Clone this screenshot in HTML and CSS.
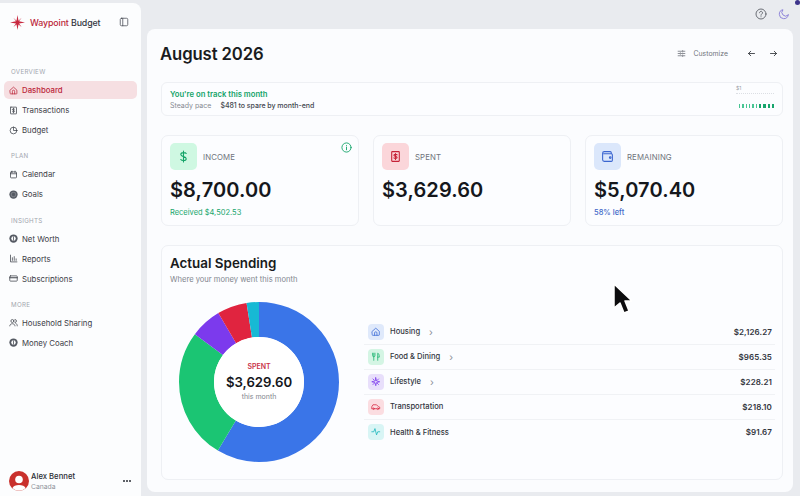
FILE: index.html
```html
<!DOCTYPE html>
<html lang="en">
<head>
<meta charset="utf-8">
<title>Waypoint Budget</title>
<link rel="stylesheet" href="styles.css">
</head>
<body>
<div class="app">
  <aside class="sidebar">
    <div class="brand">
      <svg class="logo" viewBox="0 0 20 20"><path d="M10 0l1.300 7.500 4.200-4 -3.500 4.700L20 10l-8 1.300 3.500 4.700-4.200-3.500L10 20l-1.300-7.500-4.200 3.500 3.500-4.700L0 10l8-1.800-3.500-4.700 4.200 4z" fill="#c8283f"/></svg>
      <span class="brand-name"><b>Waypoint</b> Budget</span>
      <svg class="ico collapse" viewBox="0 0 24 24"><rect x="3" y="3" width="18" height="18" rx="3"/><path d="M9 3v18"/></svg>
    </div>
    <nav class="nav">
      <div class="nav-label">OVERVIEW</div>
      <a class="nav-item active"><svg class="ico" viewBox="0 0 24 24"><path d="M3 11l9-8 9 8v9a1 1 0 0 1-1 1H4a1 1 0 0 1-1-1z"/><path d="M9 21v-7a3 3 0 0 1 6 0v7"/></svg>Dashboard</a>
      <a class="nav-item"><svg class="ico" viewBox="0 0 24 24"><rect x="4" y="3" width="16" height="18" rx="1"/><path d="M15 8.500c-1-1.500-6-1.500-6 1 0 3 6 1.500 6 4.500 0 2.500-5 2.500-6 1M12 6v12"/></svg>Transactions</a>
      <a class="nav-item"><svg class="ico" viewBox="0 0 24 24"><circle cx="12" cy="12" r="9"/><path d="M12 3v9h9"/></svg>Budget</a>
      <div class="nav-label">PLAN</div>
      <a class="nav-item"><svg class="ico" viewBox="0 0 24 24"><rect x="4" y="5" width="16" height="16" rx="2"/><path d="M4 10h16M8 3v4M16 3v4"/></svg>Calendar</a>
      <a class="nav-item"><svg class="ico" viewBox="0 0 24 24"><circle class="solid" cx="12" cy="12" r="11"/><circle class="ring" cx="12" cy="12" r="6"/></svg>Goals</a>
      <div class="nav-label">INSIGHTS</div>
      <a class="nav-item"><svg class="ico" viewBox="0 0 24 24"><circle class="solid" cx="12" cy="12" r="11"/><circle class="hole" cx="12" cy="12" r="6"/><path d="M12 7.500v9"/></svg>Net Worth</a>
      <a class="nav-item"><svg class="ico" viewBox="0 0 24 24"><path d="M4 3v18h17M9 17v-7M14 17V7M19 17v-4"/></svg>Reports</a>
      <a class="nav-item"><svg class="ico" viewBox="0 0 24 24"><rect x="2" y="5" width="20" height="14" rx="2"/><path class="thick" d="M2 10h20"/></svg>Subscriptions</a>
      <div class="nav-label">MORE</div>
      <a class="nav-item"><svg class="ico" viewBox="0 0 24 24"><circle cx="9" cy="8" r="4"/><path d="M2 21c0-8 14-8 14 0M16 4a4 4 0 0 1 0 8M18 14c2.500 1 4 3.500 4 7"/></svg>Household Sharing</a>
      <a class="nav-item"><svg class="ico" viewBox="0 0 24 24"><circle class="solid" cx="12" cy="12" r="11"/><circle class="hole" cx="12" cy="12" r="6"/><path d="M12 7.500v9"/></svg>Money Coach</a>
    </nav>
    <div class="user">
      <svg class="avatar" viewBox="0 0 20 20"><circle cx="10" cy="10" r="10" fill="#c9302c"/><circle cx="10" cy="8.500" r="3.800" fill="#fff"/><path d="M3.500 17c1-4 12-4 13 0-3 3.500-10 3.500-13 0z" fill="#fff"/></svg>
      <div class="user-text"><div class="user-name">Alex Bennet</div><div class="user-sub">Canada</div></div>
      <span class="dots"><i></i><i></i><i></i></span>
    </div>
  </aside>
  <div class="main-col">
    <header class="topbar">
      <svg class="ico top-help" viewBox="0 0 24 24"><circle cx="12" cy="12" r="10"/><path d="M9 9.500a3 3 0 1 1 4.500 2.600c-1 .6-1.500 1.100-1.500 2.400M12 17.500v.1"/></svg>
      <svg class="ico top-moon" viewBox="0 0 24 24"><path d="M20.500 14A9 9 0 1 1 10 3.500 7 7 0 0 0 20.500 14z"/></svg>
    </header>
    <main class="panel">
      <div class="head">
        <h1>August 2026</h1>
        <div class="head-tools">
          <svg class="ico tune" viewBox="0 0 24 24"><path d="M3 6h10M17 6h4M3 12h4M11 12h10M3 18h10M17 18h4M15 4v4M9 10v4M15 16v4"/></svg>
          <span class="customize">Customize</span>
          <span class="round"><svg class="ico" viewBox="0 0 24 24"><path d="M20 12H4M10 6l-6 6 6 6"/></svg></span>
          <span class="round"><svg class="ico" viewBox="0 0 24 24"><path d="M4 12h16M14 6l6 6-6 6"/></svg></span>
        </div>
      </div>
      <section class="banner">
        <div>
          <div class="banner-title">You're on track this month</div>
          <div class="banner-sub"><span>Steady pace</span><strong>$481 to spare by month-end</strong></div>
        </div>
        <div class="spark">
          <div class="spark-label">$1</div>
          <div class="spark-line"></div>
          <div class="spark-bars"><i></i><i></i><i></i><i></i><i></i><i></i><i class="hi"></i><i class="hi"></i><i class="hi"></i><i class="hi"></i></div>
        </div>
      </section>
      <section class="stats">
        <article class="card">
          <div class="card-head">
            <span class="tile green"><svg class="ico" viewBox="0 0 24 24"><path d="M17 6.500C15.500 4 7 4 7 8.500c0 5 10 2.500 10 7.500 0 4.500-8.500 4-10 1.500M12 2v20"/></svg></span>
            <span class="card-label">INCOME</span>
            <svg class="ico info" viewBox="0 0 24 24"><circle cx="12" cy="12" r="10"/><path d="M12 11v6M12 7.500v.1"/></svg>
          </div>
          <div class="amount">$8,700.00</div>
          <div class="note green-t">Received $4,502.53</div>
        </article>
        <article class="card">
          <div class="card-head">
            <span class="tile red"><svg class="ico" viewBox="0 0 24 24"><rect x="5" y="3" width="14" height="18" rx="1"/><path d="M15 9c-1-1.500-6-1.500-6 .5 0 3 6 1.500 6 4.500 0 2-5 2-6 .5M12 6.500v11"/></svg></span>
            <span class="card-label">SPENT</span>
          </div>
          <div class="amount">$3,629.60</div>
        </article>
        <article class="card">
          <div class="card-head">
            <span class="tile blue"><svg class="ico" viewBox="0 0 24 24"><path d="M19 7V5a2 2 0 0 0-2-2H6a3 3 0 0 0-3 3v12a3 3 0 0 0 3 3h13a2 2 0 0 0 2-2V9a2 2 0 0 0-2-2H5"/><circle cx="17" cy="14" r="1.500"/></svg></span>
            <span class="card-label">REMAINING</span>
          </div>
          <div class="amount">$5,070.40</div>
          <div class="note blue-t">58% left</div>
        </article>
      </section>
      <section class="chart-card">
        <h2>Actual Spending</h2>
        <p class="chart-sub">Where your money went this month</p>
        <div class="chart-body">
          <div class="donut">
            <svg viewBox="0 0 160 160">
              <circle class="seg s1" cx="80" cy="80" r="62.500" pathLength="100"/>
              <circle class="seg s2" cx="80" cy="80" r="62.500" pathLength="100"/>
              <circle class="seg s3" cx="80" cy="80" r="62.500" pathLength="100"/>
              <circle class="seg s4" cx="80" cy="80" r="62.500" pathLength="100"/>
              <circle class="seg s5" cx="80" cy="80" r="62.500" pathLength="100"/>
            </svg>
            <div class="donut-center">
              <div class="dc-label">SPENT</div>
              <div class="dc-amount">$3,629.60</div>
              <div class="dc-sub">this month</div>
            </div>
          </div>
          <ul class="rows">
            <li class="row"><span class="mini m-blue"><svg class="ico" viewBox="0 0 24 24"><path d="M3 11l9-8 9 8v9a1 1 0 0 1-1 1H4a1 1 0 0 1-1-1z"/><path d="M9 21v-6a3 3 0 0 1 6 0v6"/></svg></span><span class="row-name">Housing</span><span class="chev">›</span><span class="row-val">$2,126.27</span></li>
            <li class="row"><span class="mini m-green"><svg class="ico" viewBox="0 0 24 24"><path d="M4 3v6a3 3 0 0 0 6 0V3M7 3v18M17 21V3c3 1 4 5 4 10h-4"/></svg></span><span class="row-name">Food &amp; Dining</span><span class="chev">›</span><span class="row-val">$965.35</span></li>
            <li class="row"><span class="mini m-purple"><svg class="ico" viewBox="0 0 24 24"><path d="M12 2l2 8 8 2-8 2-2 8-2-8-8-2 8-2z"/><path d="M5 5l3 3M19 5l-3 3M5 19l3-3M19 19l-3-3"/></svg></span><span class="row-name">Lifestyle</span><span class="chev">›</span><span class="row-val">$228.21</span></li>
            <li class="row"><span class="mini m-red"><svg class="ico" viewBox="0 0 24 24"><path d="M2 17v-5l3-5h9l5 5 3 1v4h-3M8 17h6"/><circle cx="6" cy="17" r="2"/><circle cx="17" cy="17" r="2"/></svg></span><span class="row-name">Transportation</span><span class="row-val">$218.10</span></li>
            <li class="row"><span class="mini m-teal"><svg class="ico" viewBox="0 0 24 24"><path d="M2 12h5l3-8 4 16 3-8h5"/></svg></span><span class="row-name">Health &amp; Fitness</span><span class="row-val">$91.67</span></li>
          </ul>
        </div>
      </section>
    </main>
  </div>
</div>
<span class="status-dot"></span>
<svg class="cursor" viewBox="0 0 20 32"><path d="M2 1v24l6-5 4 10 5-2-4-10h7z" fill="#0c0c0e" stroke="#fff" stroke-width="1.500" stroke-linejoin="round"/></svg>
</body>
</html>
```
FILE: styles.css
```css
* { box-sizing: border-box; margin: 0; padding: 0; }
html, body { width: 800px; height: 496px; overflow: hidden; }
body { background: #e9ebef; font-family: Inter, "Noto Sans", sans-serif; color: #1a1c22; position: relative; }
.app { display: flex; height: 496px; }
.ico { width: 12px; height: 12px; fill: none; stroke: currentColor; stroke-width: 2; stroke-linecap: round; stroke-linejoin: round; flex: none; }

.sidebar { width: 141px; margin-top: 3px; background: #fcfdfe; border-radius: 0 8px 0 0; display: flex; flex-direction: column; padding: 0 4px; flex: none; }
.brand { display: flex; align-items: center; height: 38px; padding-left: 6px; }
.logo { width: 15px; height: 15px; flex: none; }
.brand-name { font-size: 8.800px; font-weight: 500; margin-left: 5px; color: #33363e; white-space: nowrap; letter-spacing: -.1px; }
.brand-name b { color: #bb2539; font-weight: 500; }
.collapse { margin-left: 18px; color: #444851; stroke-width: 1.800; width: 10px; height: 10px; }
.nav { display: flex; flex-direction: column; gap: 2px; margin-top: 27px; }
.nav-label { font-size: 6.200px; color: #a2a6ae; letter-spacing: .3px; padding-left: 7px; height: 10px; line-height: 8px; margin-top: 11.300px; margin-bottom: 1px; }
.nav-label:first-child { margin-top: 0; }
.nav-item { display: flex; align-items: center; gap: 4px; height: 18px; padding-left: 5px; font-size: 7.800px; color: #3c4048; border-radius: 5px; }
.nav-item .ico { width: 9px; height: 9px; color: #3f434b; }
.nav-item.active { background: #f6dfe2; color: #bb2539; font-weight: 500; }
.nav-item.active .ico { color: #bb2539; }
.solid { fill: #555a63; stroke: none; }
.hole { fill: #fcfdfe; stroke: none; }
.nav-item .ring { stroke: #7a7e86; stroke-width: 3; }
.nav-item .thick { stroke-width: 3; }
.user { margin-top: auto; margin-bottom: 5px; display: flex; align-items: center; padding-left: 5px; }
.avatar { width: 20px; height: 20px; flex: none; }
.user-text { margin-left: 2px; }
.user-name { font-size: 7.700px; font-weight: 500; color: #2a2d34; line-height: 10px; }
.user-sub { font-size: 6.800px; color: #8f939b; line-height: 9px; }
.dots { margin-left: auto; margin-right: 6px; display: flex; gap: 1px; }
.dots i { width: 2px; height: 2px; border-radius: 50%; background: #2a2d34; }

.main-col { flex: 1; display: flex; flex-direction: column; padding: 0 7px 4px 6px; min-width: 0; }
.topbar { height: 29px; display: flex; align-items: center; justify-content: flex-end; gap: 11px; padding: 0 3px 2px 0; }
.top-help { color: #5c6068; stroke-width: 1.800; }
.top-moon { color: #8378d6; stroke-width: 1.800; }
.panel { flex: 1; background: #fbfcfe; border-radius: 8px; padding: 0 10px 10px 14px; display: flex; flex-direction: column; }
.head { display: flex; align-items: center; justify-content: space-between; height: 53px; padding-bottom: 4px; }
h1 { font-size: 16.700px; font-weight: 600; letter-spacing: -.1px; color: #191b20; margin-left: -1px; }
.head-tools { display: flex; align-items: center; margin-right: -1px; }
.tune { width: 9px; height: 9px; color: #6a6e76; stroke-width: 2; }
.customize { font-size: 6.900px; color: #70747c; margin: 0 12px 0 8px; }
.round { width: 22px; height: 22px; display: flex; align-items: center; justify-content: center; color: #2c2f36; }
.round .ico { width: 9px; height: 9px; stroke-width: 2.200; }

.banner { height: 34px; background: #fcfdff; border: 1px solid #eef0f4; border-radius: 6px; display: flex; justify-content: space-between; padding: 6px 8px; }
.banner-title { font-size: 7.700px; font-weight: 600; color: #12a368; line-height: 11px; }
.banner-sub { font-size: 7px; line-height: 11px; color: #868a92; display: flex; gap: 9px; }
.banner-sub strong { font-weight: 500; color: #42464e; letter-spacing: -.03px; }
.spark { width: 38px; display: flex; flex-direction: column; }
.spark-label { font-size: 5px; line-height: 5px; color: #9a9ea6; margin-top: -3px; }
.spark-line { border-top: 1px dotted #dcdfe4; margin-top: 2px; }
.spark-bars { display: flex; gap: 2px; align-items: center; margin-top: 10px; padding-left: 3px; }
.spark-bars i { width: 1.500px; height: 4px; background: #48c593; }
.spark-bars i.hi { width: 2.500px; background: #17a56c; }

.stats { display: grid; grid-template-columns: repeat(3, 1fr); gap: 14px; margin-top: 19px; }
.card { height: 91px; border: 1px solid #eef0f4; border-radius: 7px; background: #fcfdff; padding: 7px 8px; }
.card-head { display: flex; align-items: center; position: relative; }
.tile { width: 27px; height: 27px; border-radius: 5px; display: flex; align-items: center; justify-content: center; flex: none; }
.tile .ico { width: 13px; height: 13px; }
.tile.green { background: #cff8e2; color: #14a468; }
.tile.red { background: #fbd6da; color: #c62238; }
.tile.blue { background: #dbe7fb; color: #3b66d0; }
.card-label { font-size: 7.800px; color: #70747c; margin-left: 6px; letter-spacing: .1px; }
.info { position: absolute; right: -2px; top: -1px; color: #16a56b; width: 11px; height: 11px; }
.amount { font-size: 20px; font-weight: 600; color: #15171c; line-height: 25px; margin-top: 8px; letter-spacing: .1px; }
.note { font-size: 7.500px; line-height: 10px; margin-top: 5px; }
.green-t { color: #17a56c; }
.blue-t { color: #3f69c9; font-weight: 500; }

.chart-card { margin-top: 19px; height: 235px; border: 1px solid #eef0f4; border-radius: 7px; background: #fcfdff; padding: 8px 7px 7px 8px; display: flex; flex-direction: column; }
h2 { font-size: 13.400px; font-weight: 600; line-height: 18px; color: #191b20; }
.chart-sub { font-size: 7.600px; color: #82868e; line-height: 11px; margin-top: 2px; }
.chart-body { display: flex; align-items: center; margin-top: 17px; }
.donut { width: 160px; height: 160px; position: relative; margin-left: 9px; flex: none; }
.donut svg { width: 160px; height: 160px; transform: rotate(-90deg); display: block; }
.seg { fill: none; stroke-width: 35; }
.s1 { stroke: #3a75e8; stroke-dasharray: 58.600 100; }
.s2 { stroke: #1bc573; stroke-dasharray: 26.600 100; stroke-dashoffset: -58.600; }
.s3 { stroke: #7c3aed; stroke-dasharray: 6.300 100; stroke-dashoffset: -85.200; }
.s4 { stroke: #e0243f; stroke-dasharray: 6 100; stroke-dashoffset: -91.500; }
.s5 { stroke: #17b9d4; stroke-dasharray: 2.500 100; stroke-dashoffset: -97.500; }
.donut-center { position: absolute; left: 35px; top: 35px; width: 90px; height: 90px; border-radius: 50%; background: #fff; display: flex; flex-direction: column; align-items: center; justify-content: center; }
.dc-label { font-size: 7px; font-weight: 600; color: #c93349; line-height: 10px; }
.dc-amount { font-size: 13.200px; font-weight: 600; color: #15171c; line-height: 18px; margin-top: 1px; }
.dc-sub { font-size: 7px; color: #82868e; line-height: 10px; margin-top: 1px; }
.rows { list-style: none; flex: 1; margin-left: 25px; }
.row { display: flex; align-items: center; height: 25px; border-bottom: 1px solid #f0f2f5; font-size: 7.600px; padding: 0 3px 0 4px; }
.row:last-child { border-bottom: 0; }
.mini { width: 16px; height: 16px; border-radius: 4px; display: flex; align-items: center; justify-content: center; flex: none; }
.mini .ico { width: 9.500px; height: 9.500px; stroke-width: 2; }
.m-blue { background: #dfe9fb; color: #3f6fd8; }
.m-green { background: #d4f5e4; color: #1cb470; }
.m-purple { background: #e8dffb; color: #7c3aed; }
.m-red { background: #fbdde1; color: #d92b45; }
.m-teal { background: #d8f5f5; color: #18b6bc; }
.row-name { color: #33363e; font-weight: 500; margin-left: 6px; }
.chev { color: #8a8e96; margin-left: 9px; font-size: 10px; line-height: 10px; }
.row-val { margin-left: auto; font-size: 8px; font-weight: 600; color: #33363e; letter-spacing: .1px; }

.status-dot { position: absolute; left: 795px; top: 0; width: 5px; height: 5px; border-radius: 50%; background: #3d348b; }
.cursor { position: absolute; left: 612px; top: 283px; width: 20px; height: 32px; }
```
